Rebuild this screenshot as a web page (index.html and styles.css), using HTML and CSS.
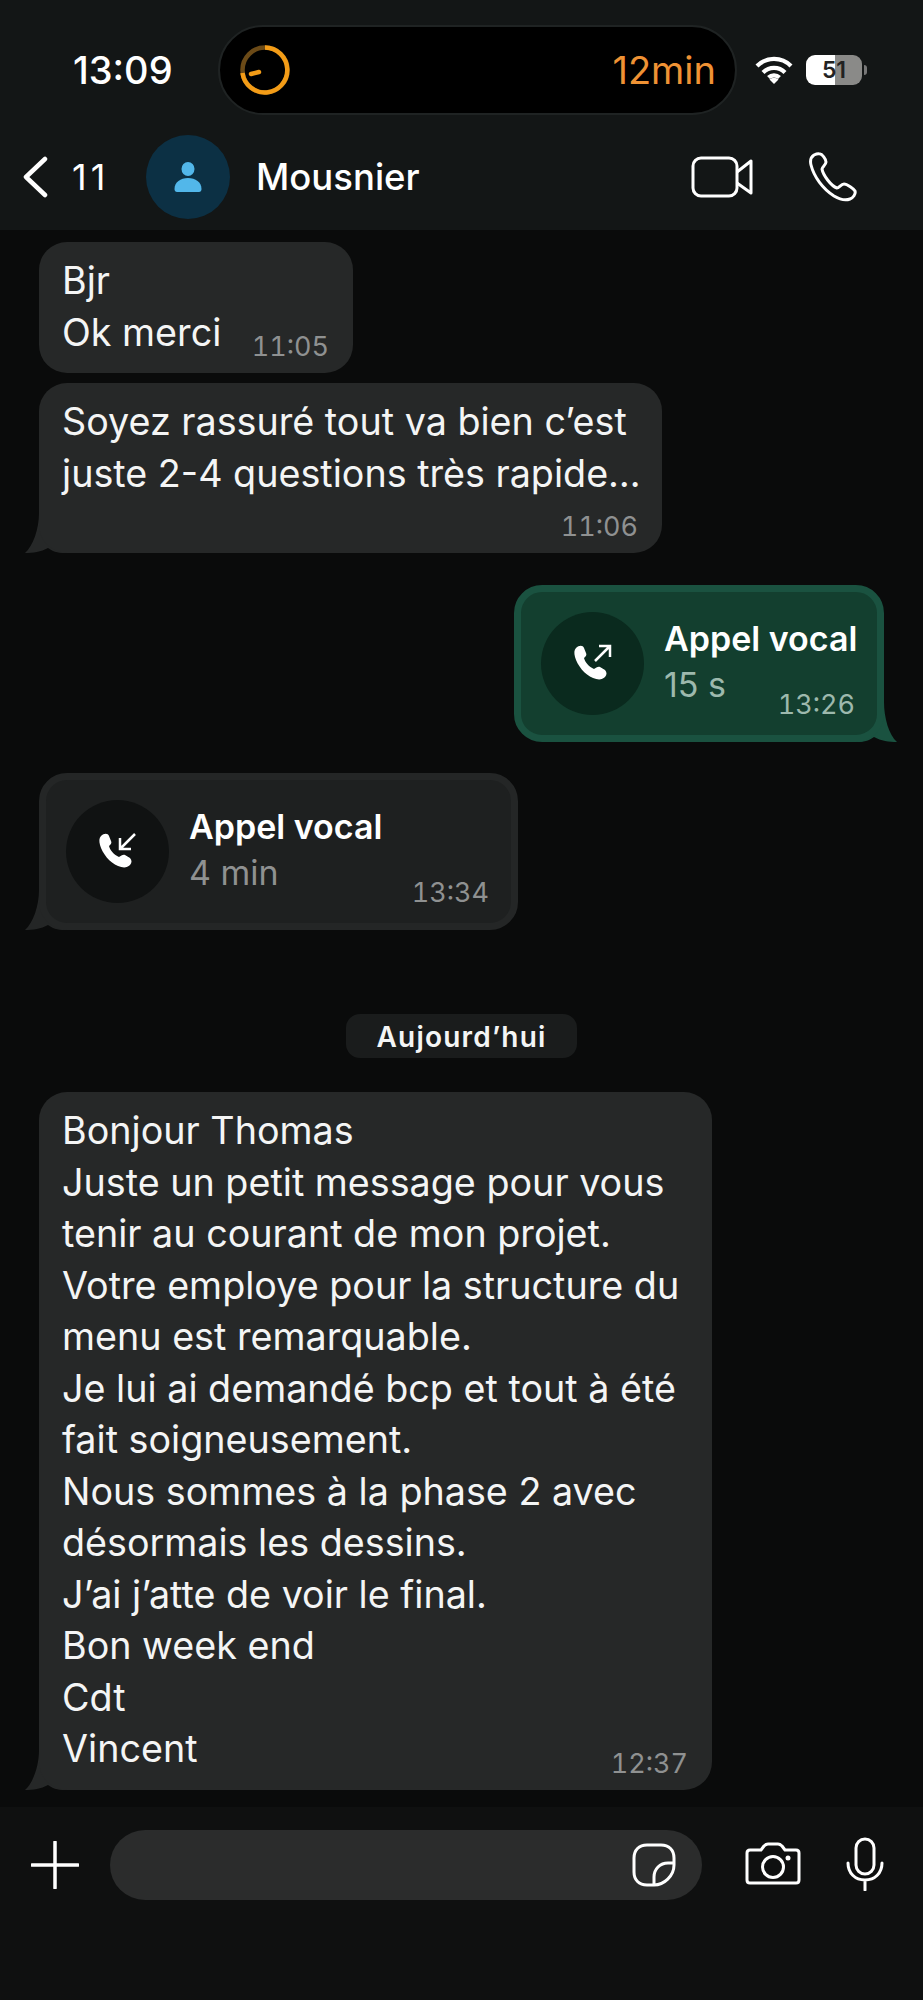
FILE: index.html
```html
<!DOCTYPE html>
<html lang="fr">

<head>
    <meta charset="UTF-8">
    <title>Mousnier</title>
    <link rel="stylesheet" href="styles.css">
</head>

<body>

    <header class="haut">
        <div class="status">
            <span class="heure">13:09</span>
            <div class="ile">
                <svg class="ring" width="50" height="50" viewBox="0 0 50 50">
                    <circle cx="25" cy="25" r="22.500" fill="none" stroke="#6b4a17" stroke-width="4.500" />
                    <path d="M25 2.500A22.500 22.500 0 1 1 2.500 28" fill="none" stroke="#f39c17" stroke-width="4.500" />
                    <path d="M11 29l8-2" fill="none" stroke="#f39c17" stroke-width="4.500" stroke-linecap="round" />
                </svg>
                <span class="minutes">12min</span>
            </div>
            <svg class="wifi" width="38" height="28" viewBox="0 0 38 28">
                <path d="M2 10a24 24 0 0 1 34 0M8 16.500a15.500 15.500 0 0 1 22 0M13.500 21.500a8 8 0 0 1 11 0" fill="none" stroke="#fff" stroke-width="4.200" />
                <path d="M19 28l-4.500-4.500a6.500 6.500 0 0 1 9 0z" fill="#fff" />
            </svg>
            <div class="batterie"><span class="niveau">51</span></div>
            <span class="borne"></span>
        </div>

        <nav class="contact">
            <svg class="retour" width="26" height="42" viewBox="0 0 26 42">
                <path d="M23 3L4 21l19 18" fill="none" stroke="#fff" stroke-width="4.500" stroke-linecap="round" stroke-linejoin="round" />
            </svg>
            <span class="compte">11</span>
            <div class="avatar">
                <svg width="30" height="30" viewBox="0 0 30 30">
                    <ellipse cx="15" cy="7" rx="6.500" ry="7" fill="#52b7ea" />
                    <path d="M1.500 27c0-7 6-11 13.500-11s13.500 4 13.500 11c0 2-1 3-2.500 3H4c-1.500 0-2.500-1-2.500-3z" fill="#52b7ea" />
                </svg>
            </div>
            <span class="nom">Mousnier</span>
            <svg class="video" width="62" height="42" viewBox="0 0 62 42">
                <rect x="2" y="2" width="44" height="38" rx="8" fill="none" stroke="#fff" stroke-width="3" />
                <path d="M46 16L60 5v32L46 27" fill="none" stroke="#fff" stroke-width="3" stroke-linejoin="round" />
            </svg>
            <svg class="tel" width="50" height="50" viewBox="0 0 50 50">
                <path d="M6 3c-3 2-4 6-3 10 3 12 12 24 23 31 5 3 11 5 16 3 3-1 6-5 5-8-1-2-8-7-11-7-3 0-5 4-7 4-6-2-14-13-15-19 0-2 4-4 4-7C18 7 14 2 12 2 10 1 8 2 6 3z" fill="none" stroke="#fff" stroke-width="3" stroke-linejoin="round" />
            </svg>
        </nav>
    </header>

    <main class="fil">

        <div class="bulle recu court">
            <p>Bjr<br>Ok merci</p>
            <span class="temps">11:05</span>
        </div>

        <div class="bulle recu queue deux">
            <p>Soyez rassuré tout va bien c’est<br>juste 2-4 questions très rapide…</p>
            <span class="temps">11:06</span>
        </div>

        <div class="appel envoye">
            <div class="rond">
                <svg width="50" height="50" viewBox="0 0 50 50">
                    <path class="combine" d="M8 9c3-3 7-3 8 0l2 5c1 2 0 3-2 5 1 4 5 9 10 11 2-1 4-3 6-2l5 3c2 2 2 5 0 7-3 3-7 3-12 1C17 36 9 26 7 18c-1-4-1-7 1-9z" />
                    <path class="fleche" d="M27 22L42 7M31 7h11v11" />
                </svg>
            </div>
            <div class="infos">
                <strong>Appel vocal</strong>
                <span>15 s</span>
            </div>
            <span class="temps">13:26</span>
        </div>

        <div class="appel gris queue">
            <div class="rond">
                <svg width="50" height="50" viewBox="0 0 50 50">
                    <path class="combine" d="M8 9c3-3 7-3 8 0l2 5c1 2 0 3-2 5 1 4 5 9 10 11 2-1 4-3 6-2l5 3c2 2 2 5 0 7-3 3-7 3-12 1C17 36 9 26 7 18c-1-4-1-7 1-9z" />
                    <path class="fleche" d="M42 7L27 22M27 11v11h11" />
                </svg>
            </div>
            <div class="infos">
                <strong>Appel vocal</strong>
                <span>4 min</span>
            </div>
            <span class="temps">13:34</span>
        </div>

        <div class="date"><span>Aujourd’hui</span></div>

        <div class="bulle recu queue long">
            <p>Bonjour Thomas<br>
                Juste un petit message pour vous<br>
                tenir au courant de mon projet.<br>
                Votre employe pour la structure du<br>
                menu est remarquable.<br>
                Je lui ai demandé bcp et tout à été<br>
                fait soigneusement.<br>
                Nous sommes à la phase 2 avec<br>
                désormais les dessins.<br>
                J’ai j’atte de voir le final.<br>
                Bon week end<br>
                Cdt<br>
                Vincent</p>
            <span class="temps">12:37</span>
        </div>

    </main>

    <footer class="bas">
        <svg class="plus" width="48" height="48" viewBox="0 0 48 48">
            <path d="M24 1v46M1 24h46" fill="none" stroke="#fff" stroke-width="3.500" stroke-linecap="round" />
        </svg>
        <div class="saisie">
            <svg width="44" height="44" viewBox="0 0 44 44">
                <path d="M15 2h14c8 0 13 5 13 13v7c0 11-10 20-20 20h-7C7 42 2 37 2 29V15C2 7 7 2 15 2z" fill="none" stroke="#fff" stroke-width="3" />
                <path d="M42 20h-6c-8 0-14 6-14 14v8" fill="none" stroke="#fff" stroke-width="3" />
            </svg>
        </div>
        <svg class="photo" width="56" height="44" viewBox="0 0 56 44">
            <path d="M5 8h11l3-4c1-1 2-2 4-2h10c2 0 3 1 4 2l3 4h11c2 0 3 1 3 3v27c0 2-1 3-3 3H5c-2 0-3-1-3-3V11c0-2 1-3 3-3z" fill="none" stroke="#fff" stroke-width="3" stroke-linejoin="round" />
            <circle cx="28" cy="25" r="10.500" fill="none" stroke="#fff" stroke-width="3" />
            <circle cx="43" cy="16" r="2.500" fill="#fff" />
        </svg>
        <svg class="micro" width="38" height="54" viewBox="0 0 38 54">
            <rect x="10" y="2" width="18" height="35" rx="9" fill="none" stroke="#fff" stroke-width="3" />
            <path d="M2 26c0 10 7 17 17 17s17-7 17-17M19 43v10" fill="none" stroke="#fff" stroke-width="3" stroke-linecap="round" />
        </svg>
    </footer>

</body></html>
```

FILE: styles.css
```css
* {
    box-sizing: border-box;
}

html,
body {
    margin: 0;
    height: 2000px;
    overflow: hidden;
}

body {
    display: flex;
    flex-direction: column;
    background-color: #0a0b0b;
    color: #f4f5f5;
    font-family: Inter, "Liberation Sans", Arial, sans-serif;
}

p {
    margin: 0;
    white-space: nowrap;
}

/* haut */

.haut {
    height: 230px;
    padding-top: 25px;
    background-color: #131616;
}

.status {
    display: flex;
    align-items: center;
    height: 90px;
}

.heure {
    width: 218px;
    padding-left: 73px;
    font-size: 38px;
    font-weight: 500;
    color: #fff;
}

.ile {
    width: 519px;
    height: 90px;
    display: flex;
    align-items: center;
    justify-content: space-between;
    padding: 0 19px 0 20px;
    background-color: #000;
    border: 2px solid #1f2323;
    border-radius: 45px;
}

.minutes {
    font-size: 38px;
    color: #ef9234;
}

.wifi {
    margin-left: 18px;
}

.batterie {
    width: 56px;
    height: 30px;
    margin-left: 13px;
    border-radius: 9px;
    background: linear-gradient(to right, #fff 52%, #8a8a88 52%);
    text-align: center;
}

.niveau {
    font-size: 23px;
    font-weight: 600;
    line-height: 30px;
    color: #222;
}

.borne {
    width: 3px;
    height: 10px;
    margin-left: 2px;
    border-radius: 0 3px 3px 0;
    background-color: #777;
}

.contact {
    display: flex;
    align-items: center;
    height: 84px;
    margin-top: 20px;
    padding-left: 22px;
}

.compte {
    width: 43px;
    margin-left: 24px;
    font-size: 36px;
    letter-spacing: 4px;
    color: #fff;
}

.avatar {
    width: 84px;
    height: 84px;
    margin-left: 31px;
    display: flex;
    align-items: center;
    justify-content: center;
    border-radius: 50%;
    background-color: #0c3044;
}

.nom {
    margin-left: 26px;
    font-size: 36.500px;
    font-weight: 500;
    color: #fff;
}

.video {
    margin-left: auto;
}

.tel {
    margin-left: 55px;
    margin-right: 65px;
}

/* fil */

.fil {
    flex: 1;
    display: flex;
    flex-direction: column;
    align-items: flex-start;
    padding: 12px 39px 0;
}

.bulle {
    position: relative;
    padding: 13px 23px 0;
    border-radius: 28px;
    background-color: #262828;
    font-size: 37.700px;
    line-height: 51.500px;
}

.temps {
    position: absolute;
    right: 24px;
    bottom: 10px;
    font-size: 27px;
    line-height: 32px;
    font-variant-numeric: tabular-nums;
    color: #8f9191;
}

.court {
    width: 314px;
    height: 131px;
}

.deux {
    width: 623px;
    height: 170px;
    margin-top: 10px;
}

.long {
    width: 673px;
    height: 698px;
    margin-top: 34px;
}

/* la queue des bulles passe derriere la bulle */

.queue::after {
    content: "";
    position: absolute;
    z-index: -1;
    left: -14px;
    bottom: 0;
    width: 50px;
    height: 40px;
    background-color: #262828;
    clip-path: path("M14 0C14 16 8 33 0 40C8 40 16 39 23 35C27 38 32 40 40 40H50V0Z");
}

.appel {
    position: relative;
    display: flex;
    align-items: center;
    height: 157px;
    border-radius: 28px;
    border: 7px solid;
}

.appel .rond {
    width: 103px;
    height: 103px;
    margin-left: 20px;
    display: flex;
    align-items: center;
    justify-content: center;
    border-radius: 50%;
}

.combine {
    fill: #fff;
}

.fleche {
    fill: none;
    stroke: #fff;
    stroke-width: 2.500;
}

.infos {
    display: flex;
    flex-direction: column;
    margin-left: 20px;
    padding-bottom: 3px;
}

.infos strong {
    font-size: 34px;
    font-weight: 600;
    line-height: 46px;
    color: #fff;
}

.infos span {
    font-size: 34px;
    line-height: 46px;
}

.envoye {
    width: 370px;
    margin-top: 32px;
    align-self: flex-end;
    background-color: #133f2f;
    border-color: #1a5240;
}

.envoye .rond {
    background-color: #0a2a1e;
}

.envoye .infos span,
.envoye .temps {
    color: #9db9ad;
}

.envoye .temps {
    right: 22px;
    bottom: 14px;
}

.envoye::after {
    content: "";
    position: absolute;
    z-index: -1;
    right: -20px;
    bottom: -7px;
    width: 50px;
    height: 40px;
    background-color: #1a5240;
    clip-path: path("M37 0C37 16 42 33 50 40C42 40 34 39 27 35C23 38 18 40 10 40H0V0Z");
}

.gris {
    width: 479px;
    margin-top: 31px;
    background-color: #1e2020;
    border-color: #242626;
}

.gris .rond {
    background-color: #101212;
}

.gris .infos span,
.gris .temps {
    color: #8f9191;
}

.gris .temps {
    right: 22px;
    bottom: 14px;
}

.gris::after {
    left: -21px;
    bottom: -7px;
    background-color: #242626;
}

.date {
    align-self: center;
    margin-top: 84px;
}

.date span {
    display: block;
    width: 231px;
    height: 44px;
    border-radius: 14px;
    background-color: #1a1c1c;
    text-align: center;
    font-size: 28px;
    font-weight: 600;
    line-height: 46px;
    letter-spacing: 1.200px;
    color: #f4f5f5;
}

/* bas */

.bas {
    height: 193px;
    display: flex;
    align-items: flex-start;
    background-color: #0f1010;
}

.plus {
    margin: 34px 0 0 31px;
}

.saisie {
    width: 592px;
    height: 70px;
    margin: 23px 0 0 31px;
    padding-right: 26px;
    display: flex;
    align-items: center;
    justify-content: flex-end;
    border-radius: 35px;
    background-color: #2b2c2c;
}

.photo {
    margin: 35px 0 0 43px;
}

.micro {
    margin: 30px 0 0 45px;
}
```
